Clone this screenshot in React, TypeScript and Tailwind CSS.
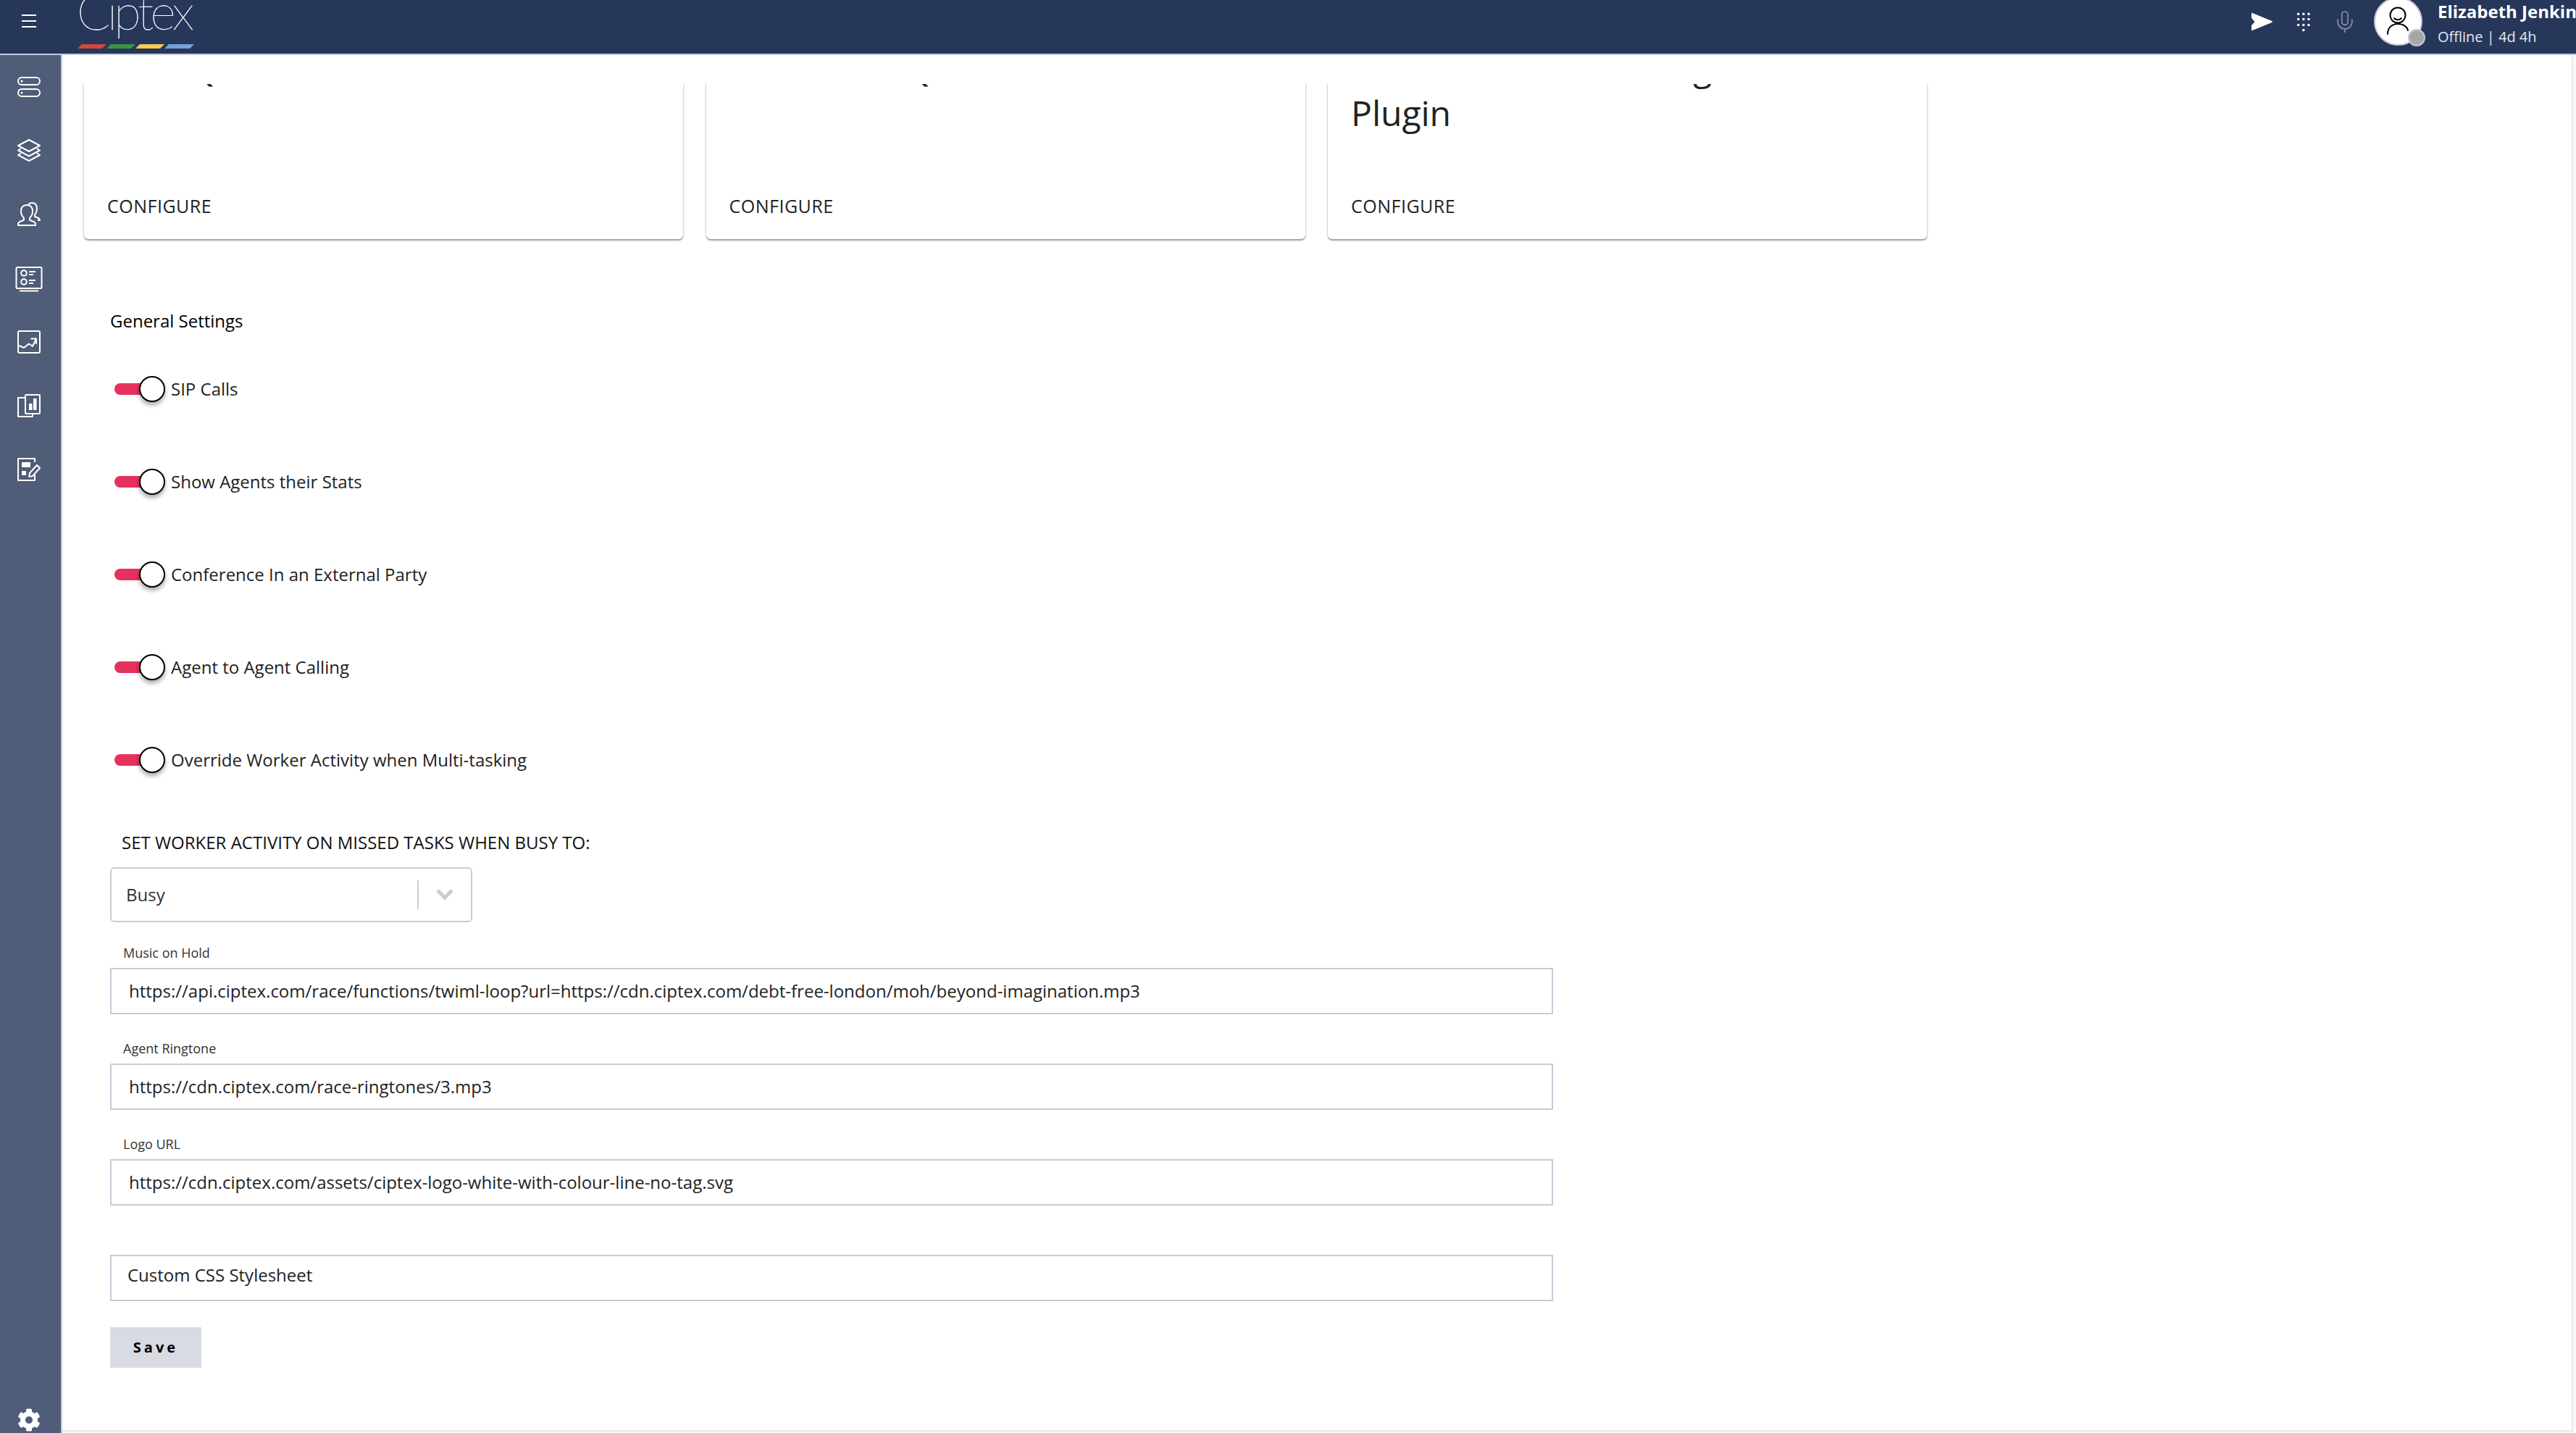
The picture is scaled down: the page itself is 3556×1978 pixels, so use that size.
import { FaCog } from "react-icons/fa";
import { Mic } from "lucide-react";

const toggles = [
  "SIP Calls",
  "Show Agents their Stats",
  "Conference In an External Party",
  "Agent to Agent Calling",
  "Override Worker Activity when Multi-tasking",
];

const fields = [
  {
    label: "Music on Hold",
    value: "https://api.ciptex.com/race/functions/twiml-loop?url=https://cdn.ciptex.com/debt-free-london/moh/beyond-imagination.mp3",
  },
  { label: "Agent Ringtone", value: "https://cdn.ciptex.com/race-ringtones/3.mp3" },
  { label: "Logo URL", value: "https://cdn.ciptex.com/assets/ciptex-logo-white-with-colour-line-no-tag.svg" },
];

const cards = [
  { title: "Task Queue", second: "" },
  { title: "Outbound Queue", second: "" },
  { title: "Twilio Voice Recording", second: "Plugin" },
];

const NavIcon = ({ children }: { children: React.ReactNode }) => (
  <div className="flex h-[88px] items-center justify-center">
    <svg width="32" height="32" viewBox="0 0 32 32" fill="none" stroke="white" strokeWidth="2" strokeLinejoin="round" className="overflow-visible">
      {children}
    </svg>
  </div>
);

const Sidebar = () => (
  <aside className="flex w-[86px] shrink-0 flex-col border-r-2 border-[#c9cbdc] bg-[#505d78] pr-[4px]">
    <NavIcon>
      <rect x="1" y="3" width="30" height="10" rx="5" />
      <rect x="1" y="19" width="30" height="10" rx="5" />
      <circle cx="6" cy="8" r="1.6" fill="white" stroke="none" />
      <circle cx="6" cy="24" r="1.6" fill="white" stroke="none" />
    </NavIcon>
    <NavIcon>
      <path d="M16 1 31 9 16 17 1 9Z" />
      <path d="M5 13 1 15.5 16 23.5 31 15.5 27 13" />
      <path d="M5 19.5 1 22 16 30 31 22 27 19.5" />
    </NavIcon>
    <NavIcon>
      <path d="M1 31v-2c0-2 2-3 5-4l3-1.5v-2.5c-2-2-4-4-4-9 0-6 3-9 8-9s8 3 8 9c0 5-2 7-4 9v2.500l3 1.500c3 1 5 2 5 4v2Z" />
      <path d="M15 3c1-2 3-3 5-3 5 0 7 3 7 8 0 5-2 7-3 9v2l5 2c2 1 2 2 2 3h-3" />
    </NavIcon>
    <NavIcon>
      <rect x="-1.500" y="1" width="35" height="29" rx="1.500" />
      <circle cx="9" cy="9" r="3.800" />
      <circle cx="9" cy="21" r="3.800" />
      <path d="M16 7h9M16 11h6M16 19h9M16 23h6" />
      <path d="M3 33.500h26" />
    </NavIcon>
    <NavIcon>
      <rect x="1" y="1" width="30" height="30" rx="2" />
      <path d="M2 21 9 24 16 18.500 21 22 26 11.500" />
      <path d="M18.500 11.500H26V19" />
    </NavIcon>
    <NavIcon>
      <path d="M11 5H1V31H21V27" />
      <rect x="11" y="1" width="20" height="26" rx="1" />
      <path d="M16 13h4.500v9H16ZM22 6h4.500v16H22Z" fill="white" stroke="none" />
    </NavIcon>
    <NavIcon>
      <path d="M24 6V1H1V31H24V22" />
      <path d="M6 6h12v7H6ZM6 18h6v6H6Z" fill="white" stroke="none" />
      <path d="M17 21 27 10 31 14 21 25 16 26Z" />
    </NavIcon>
    <div className="mt-auto flex h-[34px] justify-center text-white">
      <FaCog size={32} />
    </div>
  </aside>
);

const Header = () => (
  <header className="flex h-[76px] shrink-0 overflow-hidden border-b-2 border-[#c5c8dc] bg-[#26375a] text-white">
    <div className="flex h-full w-[80px] flex-col items-center justify-center gap-[6px] pb-[17px]">
      <span className="h-[2px] w-[20px] bg-white" />
      <span className="h-[2px] w-[20px] bg-white" />
      <span className="h-[2px] w-[20px] bg-white" />
    </div>
    <div className="ml-[27px] flex flex-col">
      <span className="-mt-[33px] -ml-[1px] h-[96px] font-['Lato',sans-serif] text-[68px] leading-[96px] font-thin tracking-[-4.5px] [-webkit-text-stroke:0.4px_white]">Ciptex</span>
      <svg width="162" height="6" viewBox="0 0 162 6" className="-mt-[2px]">
        <polygon points="6,0 40,0 34,6 0,6" fill="#d2483a" />
        <polygon points="46,0 80,0 74,6 40,6" fill="#3f9146" />
        <polygon points="86,0 120,0 114,6 80,6" fill="#f6c94f" />
        <polygon points="126,0 161,0 155,6 120,6" fill="#74a2d8" />
      </svg>
    </div>
    <div className="ml-auto flex h-full w-[448px] shrink-0 items-center">
      <svg width="33" height="28" viewBox="0 0 33 28" className="mt-[-14px]" fill="white">
        <path d="M0 1.500C0 .5 .5 0 1.500 .5L31 12.500C33 13.500 33 14.500 31 15.500L1.500 27.500C.5 28 0 27.500 0 26.500L0 20 5 14 0 8Z" />
      </svg>
      <svg width="22" height="30" viewBox="0 0 22 30" className="mt-[-14px] ml-[33px]" fill="white">
        <circle cx="3" cy="3" r="2" />
        <circle cx="11" cy="3" r="2" />
        <circle cx="19" cy="3" r="2" />
        <circle cx="3" cy="11" r="2" />
        <circle cx="11" cy="11" r="2" />
        <circle cx="19" cy="11" r="2" />
        <circle cx="3" cy="20" r="2" />
        <circle cx="11" cy="20" r="2" />
        <circle cx="19" cy="20" r="2" />
        <circle cx="11" cy="28" r="2" />
      </svg>
      <Mic size={38} strokeWidth={1.300} className="mt-[-14px] ml-[30px] text-[#7f8ba3]" />
      <div className="relative mt-[-15px] ml-[23px] size-[67px] shrink-0 rounded-full border-2 border-[#c5c8dc] bg-white">
        <svg width="63" height="63" viewBox="0 0 63 63" fill="none" stroke="black" strokeWidth="2" strokeLinecap="round">
          <circle cx="31" cy="23" r="10.500" />
          <path d="M26 27c2 3 8 3 10 0" />
          <path d="M17 49c0-9 6-14 14-14s13 4 14 9" />
        </svg>
        <span className="absolute top-[42px] left-[45px] size-[24px] rounded-full border-2 border-[#c5c8dc] bg-[#a6a6a6]" />
      </div>
      <div className="ml-[21px] flex h-full w-[191px] shrink-0 flex-col overflow-hidden whitespace-nowrap">
        <span className="text-[24px] leading-[32px] font-bold">Elizabeth Jenkins</span>
        <span className="mt-[3px] text-[20px] leading-[32px] text-[#e4e7ef]">Offline | 4d 4h</span>
      </div>
    </div>
  </header>
);

const Card = ({ title, second }: { title: string; second: string }) => (
  <div className="flex h-[300px] w-[827px] shrink-0 flex-col rounded-[6px] bg-white px-[32px] pt-[33px] shadow-[0_2px_2px_rgba(0,0,0,0.35),0_0_4px_rgba(0,0,0,0.15)]">
    <div className="text-[48px] leading-[62px] text-[#222222]">
      <div className="whitespace-nowrap">{title}</div>
      <div>{second}</div>
    </div>
    <div className="mt-auto mb-[30px] text-[25px] leading-[32px] tracking-[0.5px] text-[#222222]">CONFIGURE</div>
  </div>
);

const Toggle = ({ label }: { label: string }) => (
  <div className="flex h-[128px] items-center">
    <div className="relative ml-[6px] h-[16px] w-[60px] rounded-full bg-[#e5315b]">
      <span className="absolute top-[-10px] left-[34px] size-[36px] rounded-full border-2 border-black bg-white shadow-[0_4px_6px_rgba(0,0,0,0.35)]" />
    </div>
    <span className="ml-[18px] text-[24px] leading-[32px] text-[#222222]">{label}</span>
  </div>
);

const Field = ({ label, value }: { label: string; value: string }) => (
  <div className="mt-[35px]">
    <div className="ml-[18px] mb-[9px] text-[18px] leading-[24px] text-[#333333]">{label}</div>
    <div className="flex h-[64px] items-center border-2 border-[#c8cada] pl-[24px] text-[24px] text-[#222222]">{value}</div>
  </div>
);

export default function App() {
  return (
    <div className="flex h-screen flex-col overflow-hidden bg-[#f8f8f8] font-['Open_Sans',sans-serif]">
      <Header />
      <div className="flex min-h-0 flex-1">
        <Sidebar />
        <main className="mr-[4px] mb-[2px] min-w-0 flex-1 border-r-2 border-b-2 border-[#e8e8e8] bg-white pt-[40px]">
          <div className="h-[224px] overflow-hidden pl-[30px]">
            <div className="-mt-[86px] flex gap-[31.5px]">
              {cards.map((card) => (
                <Card key={card.title} title={card.title} second={card.second} />
              ))}
            </div>
          </div>

          <div className="ml-[66px] w-[1992px]">
            <div className="mt-[87px] text-[24px] leading-[32px] text-black">General Settings</div>
            <div className="mt-[14px]">
              {toggles.map((label) => (
                <Toggle key={label} label={label} />
              ))}
            </div>
            <div className="mt-[34px] ml-[16px] text-[24px] leading-[32px] text-[#111111]">SET WORKER ACTIVITY ON MISSED TASKS WHEN BUSY TO:</div>
            <div className="mt-[18px] flex h-[76px] w-[500px] items-center rounded-[6px] border-2 border-[#cccccc] bg-white pl-[20px] text-[24px] text-[#333333]">
              <span className="flex-1">Busy</span>
              <span className="h-[40px] w-[2px] bg-[#cccccc]" />
              <svg width="24" height="16" viewBox="0 0 24 16" className="mx-[24px]" fill="none" stroke="#cccccc" strokeWidth="5">
                <path d="M2 2l10 10L22 2" />
              </svg>
            </div>
            <div className="-mt-[5px]">
              {fields.map((field) => (
                <Field key={field.label} label={field.label} value={field.value} />
              ))}
            </div>
            <div className="mt-[68px] h-[64px] border-2 border-[#c8cada] pt-[8px] pl-[22px] text-[24px] text-[#222222]">Custom CSS Stylesheet</div>
            <button className="mt-[36px] h-[56px] w-[126px] bg-[#d8dbe3] text-[20px] font-bold tracking-[4px] text-black">Save</button>
          </div>
        </main>
      </div>
    </div>
  );
}
